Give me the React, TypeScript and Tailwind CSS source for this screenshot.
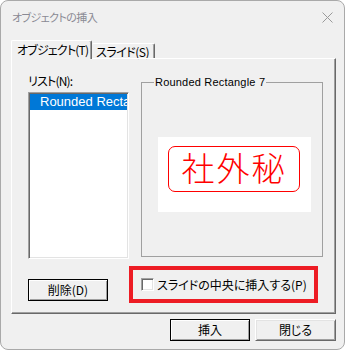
const jp = "font-['Noto_Sans_CJK_JP',sans-serif] [font-feature-settings:'palt']"
const latin = "font-['Liberation_Sans','Noto_Sans_CJK_JP',sans-serif]"

function DefaultButton({ label, className }: { label: string; className: string }) {
  return (
    <button
      className={`${jp} ${className} h-[22px] border border-black bg-[#f0f0f0] text-[12px] leading-none text-black flex items-center justify-center shadow-[inset_1px_1px_0_#ffffff,inset_-1px_-1px_0_#a0a0a0]`}
    >
      {label}
    </button>
  )
}

function Button({ label, className }: { label: string; className: string }) {
  return (
    <button
      className={`${jp} ${className} h-[22px] border border-t-white border-l-white border-r-[#696969] border-b-[#696969] bg-[#f0f0f0] text-[12px] leading-none text-black flex items-center justify-center shadow-[inset_1px_1px_0_#e3e3e3,inset_-1px_-1px_0_#a0a0a0]`}
    >
      {label}
    </button>
  )
}

export default function App() {
  return (
    <div className="w-[345px] h-[350px] bg-white">
      <div className="w-full h-full rounded-[8px] border border-[#a9a9a9] bg-[#f0f0f0] flex flex-col overflow-hidden">
        {/* Title bar */}
        <div className="h-[37px] flex items-start justify-between pl-[11px] pr-[10px] pt-[8px]">
          <span className={`${jp} text-[11px] leading-[16px] text-[#8a8a94] tracking-[-0.6px] whitespace-nowrap`}>
            オブジェクトの挿入
          </span>
          <svg width="11" height="11" viewBox="0 0 11 11" className="mt-[3px] mr-[1px]">
            <path d="M0.5 0.5 L10.5 10.5 M10.5 0.5 L0.5 10.5" stroke="#9a9a9a" strokeWidth="1" />
          </svg>
        </div>

        {/* Tabs */}
        <div className="h-[20px] pl-[10px] flex items-end">
          <div
            className={`${jp} relative z-10 -mb-px w-[81px] h-[19px] bg-[#f0f0f0] border-t border-l border-white border-r border-r-[#696969] shadow-[inset_-1px_0_0_#a0a0a0] rounded-t-[2px] pl-[5px] pt-[1px] text-[12px] leading-[16px] text-black tracking-[-0.8px] whitespace-nowrap`}
          >
            オブジェクト(T)
          </div>
          <div
            className={`${jp} w-[63px] h-[15px] border-t border-white border-r border-r-[#696969] shadow-[inset_-1px_0_0_#a0a0a0] rounded-t-[2px] pl-[4px] text-[12px] leading-[15px] text-black tracking-[-0.5px] whitespace-nowrap`}
          >
            スライド(S)
          </div>
        </div>

        {/* Tab panel */}
        <div className="ml-[10px] w-[325px] h-[256px] border border-t-white border-l-white border-r-[#696969] border-b-[#696969] shadow-[inset_-1px_-1px_0_#a0a0a0] flex pl-[16px] pt-[14px]">
          {/* Left column */}
          <div className="w-[101px] flex flex-col">
            <div className={`${jp} h-[16px] text-[12px] leading-[16px] text-black tracking-[-0.8px] whitespace-nowrap`}>リスト(N):</div>
            <div className="mt-[3px] h-[167px] bg-white border border-t-[#a0a0a0] border-l-[#a0a0a0] border-r-white border-b-white shadow-[inset_1px_1px_0_#696969,inset_-1px_-1px_0_#e3e3e3] p-px overflow-hidden">
              <div className={`${latin} h-[16px] bg-[#0078d7] text-white text-[13px] leading-[16px] pl-[10px] whitespace-nowrap overflow-hidden`}>
                Rounded Rectangle 7
              </div>
            </div>
            <DefaultButton label="削除(D)" className="mt-[20px] w-[80px]" />
          </div>

          {/* Right column */}
          <div className="flex flex-col">
            <div className="relative ml-[12px] mt-[9px] w-[182px] h-[175px] border border-[#a0a0a0]">
              <span className={`${latin} absolute left-[12px] top-[-8px] px-[1px] bg-[#f0f0f0] text-[11px] leading-[14px] text-black whitespace-nowrap tracking-[0.2px]`}>
                Rounded Rectangle 7
              </span>
              <div className="ml-[16px] mt-[54px] w-[153px] h-[75px] bg-white pt-[9px] pl-[10px]">
                <div className="w-[132px] h-[46px] border border-[#ff0000] rounded-[7px] flex items-center justify-center">
                  <span className={`${jp} text-[33px] leading-none text-[#ff0000] font-light tracking-[2px] -mt-[4px]`}>社外秘</span>
                </div>
              </div>
            </div>

            <div className="mt-[9px] w-[189px] h-[37px] border-[4px] border-[#ed1c24] flex items-center pl-[8px] gap-[3px]">
              <span className="w-[13px] h-[13px] bg-white border border-t-[#a0a0a0] border-l-[#a0a0a0] border-r-white border-b-white shadow-[inset_1px_1px_0_#696969,inset_-1px_-1px_0_#e3e3e3]" />
              <span className={`${jp} text-[12px] leading-[16px] text-black whitespace-nowrap`}>
                スライドの中央に挿入する(P)
              </span>
            </div>
          </div>
        </div>

        {/* Dialog buttons */}
        <div className="mt-[5px] flex justify-end gap-[5px] pr-[8px]">
          <DefaultButton label="挿入" className="w-[80px]" />
          <Button label="閉じる" className="w-[81px]" />
        </div>
      </div>
    </div>
  )
}
